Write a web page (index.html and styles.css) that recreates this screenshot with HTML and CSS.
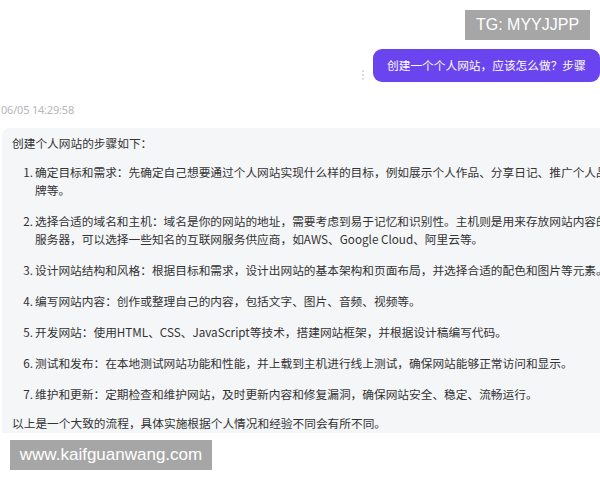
FILE: index.html
```html
<!DOCTYPE html>
<html lang="zh-CN">
<head>
<meta charset="utf-8">
<title>创建个人网站</title>
<link rel="stylesheet" href="styles.css">
</head>
<body>
<div class="page">
  <div class="user-row">
    <svg class="more" width="4" height="10" viewBox="0 0 4 10"><circle cx="2" cy="1.2" r="0.9"/><circle cx="2" cy="5" r="0.9"/><circle cx="2" cy="8.8" r="0.9"/></svg>
    <div class="bubble">创建一个个人网站，应该怎么做？步骤</div>
  </div>
  <div class="time">06/05 14:29:58</div>
  <div class="answer">
    <p class="intro">创建个人网站的步骤如下：</p>
    <ol class="steps">
      <li><span class="num">1.</span><span class="txt">确定目标和需求：先确定自己想要通过个人网站实现什么样的目标，例如展示个人作品、分享日记、推广个人品牌等。</span></li>
      <li><span class="num">2.</span><span class="txt">选择合适的域名和主机：域名是你的网站的地址，需要考虑到易于记忆和识别性。主机则是用来存放网站内容的服务器，可以选择一些知名的互联网服务供应商，如AWS、Google Cloud、阿里云等。</span></li>
      <li class="one-line"><span class="num">3.</span><span class="txt">设计网站结构和风格：根据目标和需求，设计出网站的基本架构和页面布局，并选择合适的配色和图片等元素。</span></li>
      <li><span class="num">4.</span><span class="txt">编写网站内容：创作或整理自己的内容，包括文字、图片、音频、视频等。</span></li>
      <li><span class="num">5.</span><span class="txt">开发网站：使用HTML、CSS、JavaScript等技术，搭建网站框架，并根据设计稿编写代码。</span></li>
      <li><span class="num">6.</span><span class="txt">测试和发布：在本地测试网站功能和性能，并上载到主机进行线上测试，确保网站能够正常访问和显示。</span></li>
      <li><span class="num">7.</span><span class="txt">维护和更新：定期检查和维护网站，及时更新内容和修复漏洞，确保网站安全、稳定、流畅运行。</span></li>
    </ol>
    <p class="outro">以上是一个大致的流程，具体实施根据个人情况和经验不同会有所不同。</p>
  </div>
  <div class="mark mark-tg">TG: MYYJJPP</div>
  <div class="mark mark-site">www.kaifguanwang.com</div>
</div>
</body>
</html>
```
FILE: styles.css
```css
html, body {
  margin: 0;
  padding: 0;
  background: #ffffff;
  overflow: hidden;
}
body {
  width: 600px;
  height: 480px;
  font-family: "Noto Sans CJK SC", "Noto Sans", sans-serif;
  color: #333333;
}
.page {
  position: relative;
  width: 600px;
  height: 480px;
  overflow: hidden;
}
.user-row {
  display: flex;
  justify-content: flex-end;
  align-items: flex-end;
  padding-top: 49px;
  gap: 8px;
}
.more {
  fill: #c8c8cc;
  margin-bottom: 2px;
}
.bubble {
  background: #6a44ee;
  color: #ffffff;
  font-size: 11.7px;
  line-height: 18px;
  padding: 7px 14px 8px 14px;
  border-radius: 9px;
  width: 199px;
  white-space: nowrap;
}
.time {
  margin-top: 21px;
  padding-left: 1px;
  font-size: 11px;
  line-height: 14px;
  color: #b6b6ba;
  font-family: "Noto Sans", "Open Sans", sans-serif;
  letter-spacing: -0.2px;
}
.answer {
  margin-top: 11px;
  margin-left: 2px;
  width: 640px;
  box-sizing: border-box;
  padding: 6px 20px 1px 10px;
  background: #f5f6f8;
  border-radius: 8px 0 0 0;
  font-size: 11.7px;
  line-height: 18px;
}
.intro, .outro {
  margin: 0;
}
.steps {
  list-style: none;
  margin: 11px 0 11px 0;
  padding: 0;
  display: flex;
  flex-direction: column;
  gap: 13px;
}
.steps li {
  display: flex;
  padding-left: 9px;
}
.num {
  flex: 0 0 12px;
  text-align: right;
  margin-right: 2px;
}
.txt {
  flex: 0 0 580px;
}
.one-line .txt {
  white-space: nowrap;
}
.mark {
  position: absolute;
  background: #a6a6a6;
  color: #ffffff;
  font-family: "Liberation Sans", Arial, sans-serif;
  text-align: center;
  height: 30px;
  line-height: 30px;
}
.mark-tg {
  top: 10px;
  left: 465px;
  width: 125px;
  font-size: 16px;
}
.mark-site {
  top: 440px;
  left: 10px;
  width: 202px;
  font-size: 17px;
}
```
